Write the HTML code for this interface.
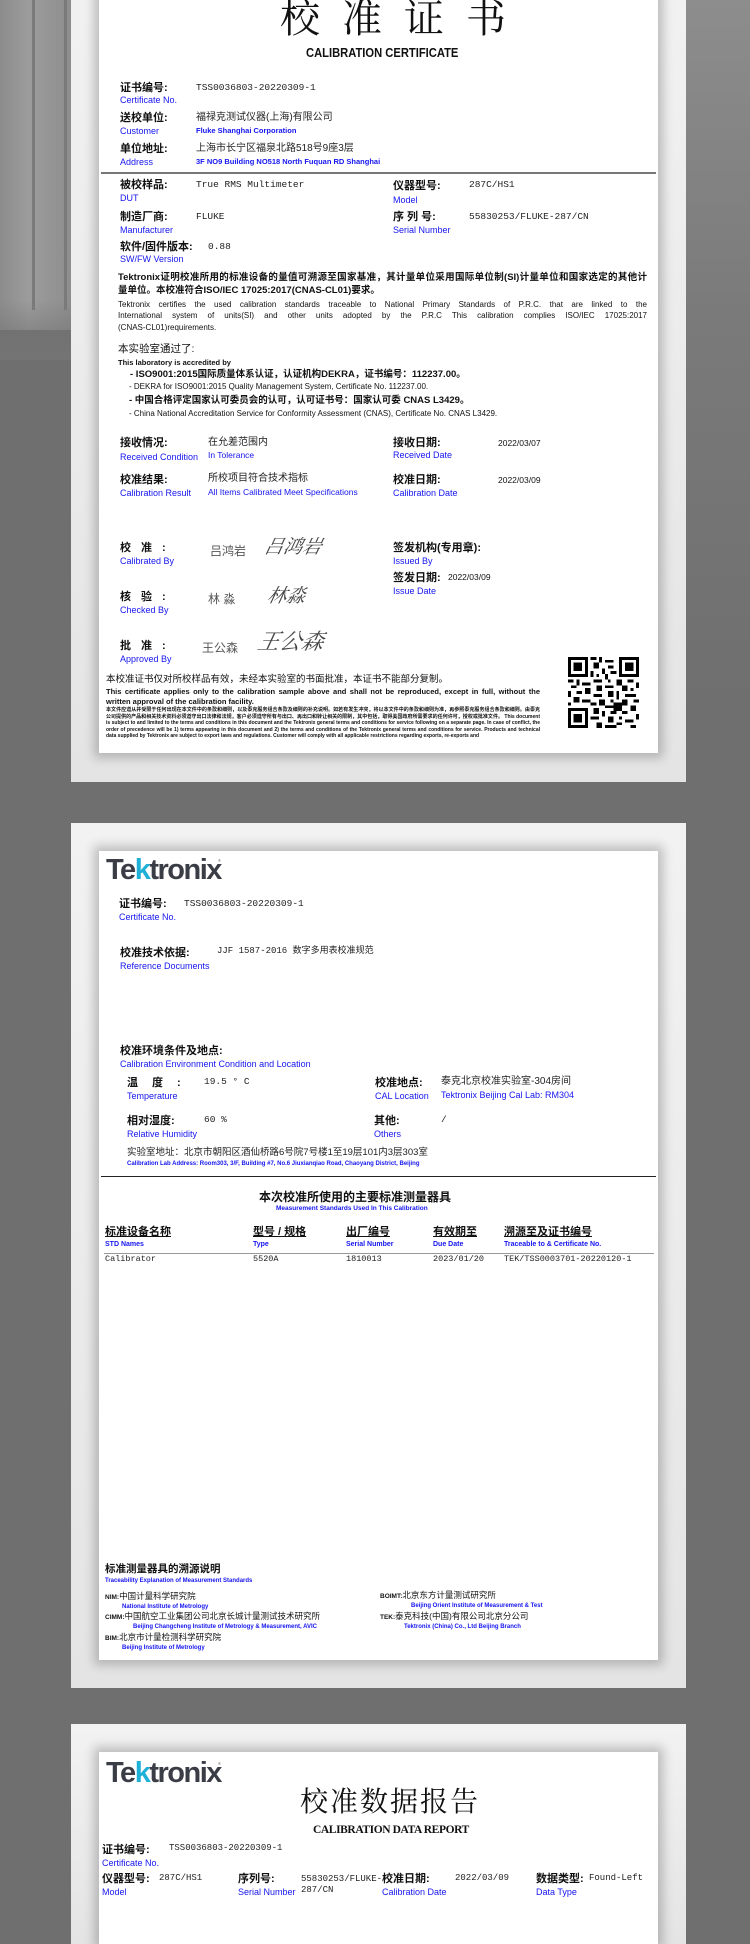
<!DOCTYPE html>
<html><head><meta charset="utf-8">
<style>
*{margin:0;padding:0;box-sizing:border-box}
body{width:750px;height:1918px;position:relative;overflow:hidden;background:#6f6f6f;font-family:"Liberation Sans","Noto Sans CJK SC",sans-serif;color:#111}
.a{position:absolute;white-space:nowrap;line-height:1}
.l{font-size:11px;font-weight:bold;color:#111}
.b{font-size:9px;color:#1515f0}
.m{font-family:"Liberation Mono","Noto Sans CJK SC",monospace;font-size:9.5px;color:#222}
.c{font-size:10px;color:#222}
.frame{position:absolute;left:71px;width:615px;background:linear-gradient(180deg,#f2f2f2,#e4e4e4);}
.paper{position:absolute;left:28px;right:28px;background:#fff;box-shadow:0 0 10px 5px rgba(0,0,0,.22)}
.sig{font-family:"Noto Serif CJK SC",serif;font-style:italic;color:#444;font-size:19px;transform:skewX(-12deg)}
.nm{font-size:12px;color:#555}
.tiny{position:absolute;left:106px;width:434px;font-size:5px;line-height:6.5px;font-weight:bold;text-align:justify;color:#111;white-space:normal}
.logo{font-weight:bold;font-size:29px;color:#3a3d45;letter-spacing:-1.5px}
.logo i{font-style:normal;color:#1fb0d8}
.j{position:absolute;left:118px;width:529px;white-space:nowrap;text-align:justify;text-align-last:justify;line-height:1}
</style></head><body>
<div style="position:absolute;left:0;top:0;width:71px;height:330px;background:linear-gradient(90deg,#8c8c8c,#9c9c9c 40%,#8e8e8e)"></div>
<div style="position:absolute;left:0;top:300px;width:71px;height:60px;background:linear-gradient(180deg,rgba(111,111,111,0),#747474)"></div>
<div style="position:absolute;left:32px;top:0;width:3px;height:310px;background:#7a7a7a"></div>
<div style="position:absolute;left:64px;top:0;width:3px;height:310px;background:#7a7a7a"></div>
<div style="position:absolute;left:686px;top:0;width:64px;height:700px;background:linear-gradient(180deg,#8d8d8d,#7a7a7a 45%,#6f6f6f)"></div>

<div class="frame" style="top:-40px;height:822px"><div class="paper" style="top:20px;bottom:29px"></div></div>
<div class="frame" style="top:823px;height:865px"><div class="paper" style="top:28px;bottom:28px"></div></div>
<div class="frame" style="top:1724px;height:220px"><div class="paper" style="top:28px;bottom:0"></div></div>

<!-- ===== page 1 ===== -->
<div class="a" style="left:280px;top:-4px;font-family:'Noto Serif CJK SC',serif;font-size:40px;letter-spacing:22px;color:#111">校准证书</div>
<div class="a" style="left:306px;top:46px;font-size:13px;font-weight:bold;transform:scaleX(.86);transform-origin:left">CALIBRATION CERTIFICATE</div>

<div class="a l" style="left:120px;top:83px">证书编号:</div><div class="a b" style="left:120px;top:96px">Certificate No.</div>
<div class="a m" style="left:196px;top:83px">TSS0036803-20220309-1</div>
<div class="a l" style="left:120px;top:113px">送校单位:</div><div class="a b" style="left:120px;top:127px">Customer</div>
<div class="a c" style="left:196px;top:113px">福禄克测试仪器(上海)有限公司</div>
<div class="a b" style="left:196px;top:127px;font-size:7.5px;font-weight:bold">Fluke Shanghai Corporation</div>
<div class="a l" style="left:120px;top:144px">单位地址:</div><div class="a b" style="left:120px;top:158px">Address</div>
<div class="a c" style="left:196px;top:144px">上海市长宁区福泉北路518号9座3层</div>
<div class="a b" style="left:196px;top:158px;font-size:7.5px;font-weight:bold">3F NO9 Building NO518 North Fuquan RD Shanghai</div>
<div style="position:absolute;left:101px;top:172px;width:555px;height:2px;background:#777"></div>

<div class="a l" style="left:120px;top:180px">被校样品:</div><div class="a b" style="left:120px;top:194px">DUT</div>
<div class="a m" style="left:196px;top:180px">True RMS Multimeter</div>
<div class="a l" style="left:393px;top:181px">仪器型号:</div><div class="a b" style="left:393px;top:196px">Model</div>
<div class="a m" style="left:469px;top:180px">287C/HS1</div>
<div class="a l" style="left:120px;top:212px">制造厂商:</div><div class="a b" style="left:120px;top:226px">Manufacturer</div>
<div class="a m" style="left:196px;top:212px">FLUKE</div>
<div class="a l" style="left:393px;top:212px">序 列 号:</div><div class="a b" style="left:393px;top:226px">Serial Number</div>
<div class="a m" style="left:469px;top:212px">55830253/FLUKE-287/CN</div>
<div class="a l" style="left:120px;top:242px">软件/固件版本:</div><div class="a b" style="left:120px;top:255px">SW/FW Version</div>
<div class="a m" style="left:208px;top:242px">0.88</div>

<div class="j" style="top:273px;font-size:9.5px;font-weight:bold">Tektronix证明校准所用的标准设备的量值可溯源至国家基准，其计量单位采用国际单位制(SI)计量单位和国家选定的其他计</div>
<div class="a" style="left:118px;top:286px;font-size:9.5px;font-weight:bold">量单位。本校准符合ISO/IEC 17025:2017(CNAS-CL01)要求。</div>
<div class="j" style="top:301px;font-size:8px">Tektronix certifies the used calibration standards traceable to National Primary Standards of P.R.C. that are linked to the</div>
<div class="j" style="top:312px;font-size:8px">International system of units(SI) and other units adopted by the P.R.C This calibration complies ISO/IEC 17025:2017</div>
<div class="a" style="left:118px;top:324px;font-size:8px">(CNAS-CL01)requirements.</div>

<div class="a" style="left:118px;top:344px;font-size:10.5px">本实验室通过了:</div>
<div class="a" style="left:118px;top:359px;font-size:7.5px;font-weight:bold">This laboratory is accredited by</div>
<div class="a" style="left:130px;top:370px;font-size:9.5px;font-weight:bold">- ISO9001:2015国际质量体系认证，认证机构DEKRA，证书编号：112237.00。</div>
<div class="a" style="left:129px;top:383px;font-size:8px">- DEKRA for ISO9001:2015 Quality Management System, Certificate No. 112237.00.</div>
<div class="a" style="left:129px;top:396px;font-size:9.5px;font-weight:bold">- 中国合格评定国家认可委员会的认可，认可证书号：国家认可委 CNAS L3429。</div>
<div class="a" style="left:129px;top:410px;font-size:8px">- China National Accreditation Service for Conformity Assessment (CNAS), Certificate No. CNAS L3429.</div>

<div class="a l" style="left:120px;top:438px">接收情况:</div><div class="a b" style="left:120px;top:453px">Received Condition</div>
<div class="a c" style="left:208px;top:438px">在允差范围内</div><div class="a b" style="left:208px;top:451px;font-size:8.5px">In Tolerance</div>
<div class="a l" style="left:393px;top:438px">接收日期:</div><div class="a b" style="left:393px;top:451px">Received Date</div>
<div class="a" style="left:498px;top:439px;font-size:8.5px">2022/03/07</div>
<div class="a l" style="left:120px;top:475px">校准结果:</div><div class="a b" style="left:120px;top:489px">Calibration Result</div>
<div class="a c" style="left:208px;top:474px">所校项目符合技术指标</div><div class="a b" style="left:208px;top:488px;font-size:8.5px">All Items Calibrated Meet Specifications</div>
<div class="a l" style="left:393px;top:475px">校准日期:</div><div class="a b" style="left:393px;top:489px">Calibration Date</div>
<div class="a" style="left:498px;top:476px;font-size:8.5px">2022/03/09</div>

<div class="a l" style="left:120px;top:543px;letter-spacing:10px">校准:</div><div class="a b" style="left:120px;top:557px">Calibrated By</div>
<div class="a nm" style="left:210px;top:545px">吕鸿岩</div><div class="a sig" style="left:265px;top:536px">吕鸿岩</div>
<div class="a l" style="left:393px;top:543px">签发机构(专用章):</div><div class="a b" style="left:393px;top:557px">Issued By</div>
<div class="a l" style="left:393px;top:573px">签发日期:</div><div class="a" style="left:448px;top:573px;font-size:8.5px">2022/03/09</div>
<div class="a b" style="left:393px;top:587px">Issue Date</div>
<div class="a l" style="left:120px;top:592px;letter-spacing:10px">核验:</div><div class="a b" style="left:120px;top:606px">Checked By</div>
<div class="a nm" style="left:208px;top:593px">林 淼</div><div class="a sig" style="left:268px;top:585px">林淼</div>
<div class="a l" style="left:120px;top:641px;letter-spacing:10px">批准:</div><div class="a b" style="left:120px;top:655px">Approved By</div>
<div class="a nm" style="left:202px;top:642px">王公森</div><div class="a sig" style="left:258px;top:630px;font-size:22px">王公森</div>

<div class="a" style="left:106px;top:675px;font-size:9.5px">本校准证书仅对所校样品有效，未经本实验室的书面批准，本证书不能部分复制。</div>
<div style="position:absolute;left:106px;top:687px;width:434px;font-size:7.5px;line-height:10px;text-align:justify;text-align-last:left;font-weight:bold">This certificate applies only to the calibration sample above and shall not be reproduced, except in full, without the written approval of the calibration facility.</div>
<div class="tiny" style="top:707px">本文件应遵从并受限于任何出现在本文件中的条款和细则，以及泰克服务组合条款及细则的补充说明。如若有发生冲突，将以本文件中的条款和细则为准，再参照泰克服务组合条款和细则。由泰克公司提供的产品和相关技术资料必须遵守出口法律和法规，客户必须遵守所有与出口、再出口和转让相关的限制，其中包括，取得美国政府所需要求的任何许可，授权或批准文件。 This document is subject to and limited to the terms and conditions in this document and the Tektronix general terms and conditions for service following on a separate page. In case of conflict, the order of precedence will be 1) terms appearing in this document and 2) the terms and conditions of the Tektronix general terms and conditions for service. Products and technical data supplied by Tektronix are subject to export laws and regulations. Customer will comply with all applicable restrictions regarding exports, re-exports and</div>

<svg style="position:absolute;left:567px;top:657px" width="73" height="71" viewBox="0 0 25 25" shape-rendering="crispEdges">
<rect width="25" height="25" fill="#fff"/>
<g fill="#000">
<path d="M0 0h7v7h-7zM1 1v5h5v-5zM2 2h3v3h-3z" fill-rule="evenodd"/>
<path d="M18 0h7v7h-7zM19 1v5h5v-5zM20 2h3v3h-3z" fill-rule="evenodd"/>
<path d="M0 18h7v7h-7zM1 19v5h5v-5zM2 20h3v3h-3z" fill-rule="evenodd"/>
<path d="M8 0h2v1h-2zM11 0h1v2h-1zM13 1h3v1h-3zM9 2h2v2h-2zM14 3h2v1h-2zM12 4h1v2h-1zM8 5h1v2h-1zM15 5h2v1h-2zM10 6h1v1h-1zM13 6h1v2h-1zM0 8h2v1h-2zM3 8h1v2h-1zM5 9h3v1h-3zM9 8h3v1h-3zM14 8h1v1h-1zM17 8h2v2h-2zM21 8h2v1h-2zM24 9h1v2h-1zM1 10h2v1h-2zM6 11h2v2h-2zM10 10h2v2h-2zM13 10h3v1h-3zM19 10h2v2h-2zM22 11h1v1h-1zM0 12h1v2h-1zM3 12h2v1h-2zM9 13h3v1h-3zM14 12h2v2h-2zM17 12h1v3h-1zM20 13h4v1h-4zM2 14h2v2h-2zM5 15h3v1h-3zM11 15h2v2h-2zM15 15h1v1h-1zM19 15h2v2h-2zM23 15h2v1h-2zM0 16h1v1h-1zM8 16h2v1h-2zM13 17h3v1h-3zM17 17h1v2h-1zM22 17h2v2h-2zM9 18h2v2h-2zM12 19h1v2h-1zM15 19h2v1h-2zM19 19h2v1h-2zM24 20h1v2h-1zM8 21h3v1h-3zM14 21h2v2h-2zM18 21h1v1h-1zM20 22h3v1h-3zM10 23h2v2h-2zM13 24h4v1h-4zM17 23h2v1h-2zM22 24h2v1h-2zM16 16h3v3h-3zM17 17h1v1h-1z"/>
</g></svg>

<!-- ===== page 2 ===== -->
<div class="a logo" style="left:106px;top:856px">Te<i>k</i>tronix</div>
<div class="a" style="left:218px;top:859px;font-size:4px;color:#666">®</div>
<div class="a l" style="left:119px;top:899px">证书编号:</div><div class="a b" style="left:119px;top:913px">Certificate No.</div>
<div class="a m" style="left:184px;top:899px">TSS0036803-20220309-1</div>
<div class="a l" style="left:120px;top:948px">校准技术依据:</div><div class="a b" style="left:120px;top:962px">Reference Documents</div>
<div class="a m" style="left:217px;top:947px;font-size:9px">JJF 1587-2016 数字多用表校准规范</div>
<div class="a l" style="left:120px;top:1046px">校准环境条件及地点:</div><div class="a b" style="left:120px;top:1060px">Calibration Environment Condition and Location</div>
<div class="a l" style="left:127px;top:1078px;letter-spacing:14px">温度:</div><div class="a b" style="left:127px;top:1092px">Temperature</div>
<div class="a m" style="left:204px;top:1077px">19.5 ° C</div>
<div class="a l" style="left:375px;top:1078px">校准地点:</div><div class="a b" style="left:375px;top:1092px">CAL Location</div>
<div class="a c" style="left:441px;top:1077px">泰克北京校准实验室-304房间</div><div class="a b" style="left:441px;top:1091px">Tektronix Beijing Cal Lab: RM304</div>
<div class="a l" style="left:127px;top:1116px">相对湿度:</div><div class="a b" style="left:127px;top:1130px">Relative Humidity</div>
<div class="a m" style="left:204px;top:1115px">60 %</div>
<div class="a l" style="left:374px;top:1116px">其他:</div><div class="a b" style="left:374px;top:1130px">Others</div>
<div class="a m" style="left:441px;top:1115px">/</div>
<div class="a c" style="left:127px;top:1148px;font-size:9.5px">实验室地址：北京市朝阳区酒仙桥路6号院7号楼1至19层101内3层303室</div>
<div class="a b" style="left:127px;top:1161px;font-size:6px;font-weight:bold">Calibration Lab Address: Room303, 3/F, Building #7, No.6 Jiuxianqiao Road, Chaoyang District, Beijing</div>
<div style="position:absolute;left:101px;top:1176px;width:555px;height:1px;background:#222"></div>
<div class="a" style="left:259px;top:1191px;font-size:12px;font-weight:bold">本次校准所使用的主要标准测量器具</div>
<div class="a b" style="left:276px;top:1206px;font-size:6.5px;font-weight:bold">Measurement Standards Used In This Calibration</div>
<div class="a l" style="left:105px;top:1227px;text-decoration:underline">标准设备名称</div><div class="a b" style="left:105px;top:1241px;font-size:7px;font-weight:bold">STD Names</div>
<div class="a l" style="left:253px;top:1227px;text-decoration:underline">型号 / 规格</div><div class="a b" style="left:253px;top:1241px;font-size:7px;font-weight:bold">Type</div>
<div class="a l" style="left:346px;top:1227px;text-decoration:underline">出厂编号</div><div class="a b" style="left:346px;top:1241px;font-size:7px;font-weight:bold">Serial Number</div>
<div class="a l" style="left:433px;top:1227px;text-decoration:underline">有效期至</div><div class="a b" style="left:433px;top:1241px;font-size:7px;font-weight:bold">Due Date</div>
<div class="a l" style="left:504px;top:1227px;text-decoration:underline">溯源至及证书编号</div><div class="a b" style="left:504px;top:1241px;font-size:7px;font-weight:bold">Traceable to &amp; Certificate No.</div>
<div style="position:absolute;left:104px;top:1253px;width:550px;height:1px;background:#999"></div>
<div class="a m" style="left:105px;top:1255px;font-size:8.5px">Calibrator</div>
<div class="a m" style="left:253px;top:1255px;font-size:8.5px">5520A</div>
<div class="a m" style="left:346px;top:1255px;font-size:8.5px">1810013</div>
<div class="a m" style="left:433px;top:1255px;font-size:8.5px">2023/01/20</div>
<div class="a m" style="left:504px;top:1255px;font-size:8.5px">TEK/TSS0003701-20220120-1</div>

<div class="a" style="left:105px;top:1564px;font-size:10.5px;font-weight:bold">标准测量器具的溯源说明</div>
<div class="a b" style="left:105px;top:1578px;font-size:6px;font-weight:bold">Traceability Explanation of Measurement Standards</div>
<div class="a" style="left:105px;top:1592px;font-size:8.5px"><b style="font-size:6.5px">NIM:</b>中国计量科学研究院</div>
<div class="a b" style="left:122px;top:1604px;font-size:6px;font-weight:bold">National Institute of Metrology</div>
<div class="a" style="left:105px;top:1612px;font-size:8.5px"><b style="font-size:6.5px">CIMM:</b>中国航空工业集团公司北京长城计量测试技术研究所</div>
<div class="a b" style="left:133px;top:1624px;font-size:6px;font-weight:bold">Beijing Changcheng Institute of Metrology &amp; Measurement, AVIC</div>
<div class="a" style="left:105px;top:1633px;font-size:8.5px"><b style="font-size:6.5px">BIM:</b>北京市计量检测科学研究院</div>
<div class="a b" style="left:122px;top:1645px;font-size:6px;font-weight:bold">Beijing Institute of Metrology</div>
<div class="a" style="left:380px;top:1591px;font-size:8.5px"><b style="font-size:6.5px">BOIMT:</b>北京东方计量测试研究所</div>
<div class="a b" style="left:411px;top:1603px;font-size:6px;font-weight:bold">Beijing Orient Institute of Measurement &amp; Test</div>
<div class="a" style="left:380px;top:1612px;font-size:8.5px"><b style="font-size:6.5px">TEK:</b>泰克科技(中国)有限公司北京分公司</div>
<div class="a b" style="left:404px;top:1624px;font-size:6px;font-weight:bold">Tektronix (China) Co., Ltd Beijing Branch</div>

<!-- ===== page 3 ===== -->
<div class="a logo" style="left:106px;top:1759px">Te<i>k</i>tronix</div>
<div class="a" style="left:218px;top:1762px;font-size:4px;color:#666">®</div>
<div class="a" style="left:300px;top:1786px;font-family:'Noto Serif CJK SC',serif;font-size:28px;letter-spacing:2px;color:#111">校准数据报告</div>
<div class="a" style="left:313px;top:1825px;font-family:'Liberation Serif',serif;font-weight:bold;font-size:11.5px;letter-spacing:-.4px">CALIBRATION DATA REPORT</div>
<div class="a l" style="left:102px;top:1845px">证书编号:</div><div class="a b" style="left:102px;top:1859px">Certificate No.</div>
<div class="a m" style="left:169px;top:1844px;font-size:9px">TSS0036803-20220309-1</div>
<div class="a l" style="left:102px;top:1874px">仪器型号:</div><div class="a b" style="left:102px;top:1888px">Model</div>
<div class="a m" style="left:159px;top:1874px;font-size:9px">287C/HS1</div>
<div class="a l" style="left:238px;top:1874px">序列号:</div><div class="a b" style="left:238px;top:1888px">Serial Number</div>
<div class="a m" style="left:301px;top:1874px;font-size:9px;line-height:11px">55830253/FLUKE-<br>287/CN</div>
<div class="a l" style="left:382px;top:1874px">校准日期:</div><div class="a b" style="left:382px;top:1888px">Calibration Date</div>
<div class="a m" style="left:455px;top:1874px;font-size:9px">2022/03/09</div>
<div class="a l" style="left:536px;top:1874px">数据类型:</div><div class="a b" style="left:536px;top:1888px">Data Type</div>
<div class="a m" style="left:589px;top:1874px;font-size:9px">Found-Left</div>
</body></html>
